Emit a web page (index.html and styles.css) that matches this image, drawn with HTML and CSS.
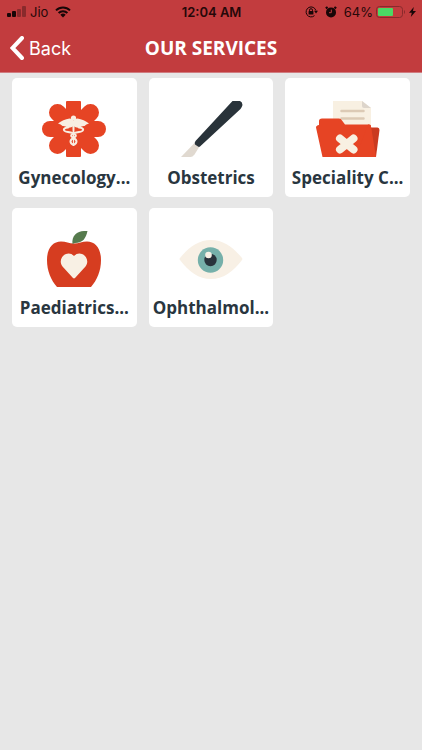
FILE: index.html
```html
<!DOCTYPE html>
<html lang="en">
<head>
<meta charset="utf-8">
<meta name="viewport" content="width=device-width, initial-scale=1">
<title>Our Services</title>
<link rel="stylesheet" href="styles.css">
</head>
<body>
<header class="header">
  <div class="status">
    <div class="status-side">
      <svg class="signal" width="19" height="12" viewBox="0 0 19 12" aria-hidden="true">
        <rect x="0" y="7" width="4" height="4" rx="1"/>
        <rect x="5" y="5" width="4" height="6" rx="1"/>
        <rect class="faint" x="10" y="3" width="4" height="8" rx="1"/>
        <rect class="faint" x="15" y="0" width="4" height="11" rx="1"/>
      </svg>
      <span class="carrier">Jio</span>
      <svg class="wifi" width="16" height="12" viewBox="0 0 16 12" aria-hidden="true">
        <path class="line" d="M1 4.4a10 10 0 0 1 14 0M3.6 7a6.3 6.3 0 0 1 8.8 0"/>
        <path d="M8 11.6 5.3 8.8a4 4 0 0 1 5.4 0z"/>
      </svg>
    </div>
    <span class="time">12:04 AM</span>
    <div class="status-side status-end">
      <svg class="lock" width="13" height="12" viewBox="0 0 13 12" aria-hidden="true">
        <path class="thin" d="M10.900 4.500A5 5 0 1 0 9.500 9.600M4.500 5.500V4.200a1.500 1.500 0 0 1 3 0v1.300"/>
        <rect x="3.600" y="5" width="4.800" height="3.600" rx=".5"/>
        <path d="M9 4.800h4l-2 2.800z"/>
      </svg>
      <svg class="alarm" width="12" height="12" viewBox="0 0 12 12" aria-hidden="true">
        <circle cx="6" cy="6.400" r="5"/>
        <path class="line" d="M.8 2.400 2.600 1M11.200 2.400 9.400 1"/>
        <path class="hands" d="M6.300 3.600v3.100H4"/>
      </svg>
      <span class="percent">64%</span>
      <svg class="battery" width="29" height="14" viewBox="0 0 29 14" aria-hidden="true">
        <rect class="case" x=".5" y="1.500" width="26" height="11" rx="3"/>
        <rect class="charge" x="2" y="3" width="15" height="8" rx="1"/>
        <path class="faint" d="M28 5v4q1-.6 1-2t-1-2z"/>
      </svg>
      <svg class="bolt" width="7" height="10" viewBox="0 0 7 10" aria-hidden="true"><path d="M4.800 0 0 5.800h2.800L1.800 10 7 4H4z"/></svg>
    </div>
  </div>
  <nav class="nav">
    <a class="back" href="#">
      <svg width="14" height="24" viewBox="0 0 14 24" aria-hidden="true"><path d="M12 2 2.500 12 12 22"/></svg>
      <span>Back</span>
    </a>
    <h1 class="title">OUR SERVICES</h1>
  </nav>
</header>
<main class="services">
  <a class="card" href="#">
    <svg class="icon" viewBox="0 0 64 56" aria-hidden="true">
      <path fill="#e64424" d="M24 1q0-1 1-1h13q1 0 1 1v54q0 1-1 1H25q-1 0-1-1z"/>
      <path stroke="#e64424" stroke-width="16" stroke-linecap="round" d="M8 28h48"/>
      <path stroke="#e64424" stroke-width="17" stroke-linecap="round" d="m15.500 11.500 33 33M48.500 11.500l-33 33"/>
      <g fill="#f8eee2">
        <circle cx="31.500" cy="17" r="2.600"/>
        <path d="M16 22.500q5-4 11.500-5 3 0 4 2 1-2 4-2 6.500 1 11.500 5-3 .8-4.500 2.500-3-.2-5 1.500-3 .8-6-1.500-3 2.300-6 1.500-2-1.700-5-1.500-1.500-1.700-4.500-2.500z"/>
        <path d="M30.300 20h2.400l-.7 25h-1z"/>
      </g>
      <path stroke="#f8eee2" stroke-width="2" stroke-linecap="round" d="M26 26.500c-6 .5-5 4 0 4.500 8 1 10 4 5.500 6-4 2-4 5 0 7M37 26.500c6 .5 5 4 0 4.500-8 1-10 4-5.500 6 4 2 4 5 0 7"/>
    </svg>
    <span class="label">Gynecology...</span>
  </a>
  <a class="card" href="#">
    <svg class="icon" viewBox="0 0 64 56" aria-hidden="true">
      <path fill="#e0d9d0" d="M15 42.500 2 56h9.500q2 0 4-2.500l5-8z"/>
      <path fill="#29333a" d="M53.500 0h7.500q2.500 1 2.500 4-.5 2-2 4L21 45.500q-1 .8-2 0l-3-2q-1-1.500.5-3.500z"/>
    </svg>
    <span class="label">Obstetrics</span>
  </a>
  <a class="card" href="#">
    <svg class="icon" viewBox="0 0 64 56" aria-hidden="true">
      <path fill="#f8f0e2" d="M17 0h29l9 7v20H17z"/>
      <path fill="#ddd5cb" d="M46 0l9 7h-7q-2 0-2-2z"/>
      <path stroke="#dccab5" stroke-width="2.500" stroke-linecap="round" d="M25.500 10h22M25.500 17.500h22"/>
      <path fill="#ca3a20" d="M55 26.500h6.500q2 0 2 2.500L60 56h-8z"/>
      <path fill="#e64424" d="M0 26.500q0-2 3-2.500V20q0-2.500 3-2.500h17q2 0 3 2l3 4h24q2 0 2 2L60 56H6.500z"/>
      <path fill="#e64424" d="M52 23.500h1q2 0 2 2l2 30.500H40z"/>
      <path stroke="#f8f0e2" stroke-width="8" stroke-linecap="round" d="m24 37.500 13.500 11M37.500 37.500 24 48.500"/>
    </svg>
    <span class="label">Speciality C...</span>
  </a>
  <a class="card" href="#">
    <svg class="icon" viewBox="0 0 64 56" aria-hidden="true">
      <path fill="#d63d20" d="M15 56C9 49 5 40 5 29c0-12 6-18.500 14-18.500 5 0 8 2 13 2s8-2 13-2C53 10.500 59 17 59 29c0 11-4 20-10 27z"/>
      <path fill="#567b4e" d="M30.500 13C29.500 5 35 0 42 0h3.500C44 7 41 12 33 12z"/>
      <path fill="#f8f0e4" d="M33 47q-1 .8-2 0L20.500 35.500C17 31 19 25 24 23q4.500-1.500 8 2 3.500-3.500 8-2c5 2 7 8 3.500 12.500z"/>
    </svg>
    <span class="label">Paediatrics...</span>
  </a>
  <a class="card" href="#">
    <svg class="icon" viewBox="0 0 64 56" aria-hidden="true">
      <path fill="#f8f0e5" d="M1 29Q0 28 1 27C10 16 20 9 32 9s22 7 31 18q.8 1 0 2C54 41 44 48 32 48S10 41 1 29z"/>
      <circle cx="31.500" cy="29" r="12.700" fill="#76b0aa"/>
      <circle cx="31.500" cy="29" r="6.200" fill="#29333c"/>
      <circle cx="29.500" cy="24" r="3.300" fill="#f8f0e5"/>
    </svg>
    <span class="label">Ophthalmol...</span>
  </a>
</main>
</body>
</html>
```

FILE: styles.css
```css
* {
  box-sizing: border-box;
}

body {
  margin: 0;
  min-height: 100vh;
  background: #e7e7e7;
  color: #29363f;
  font-family: "Open Sans", sans-serif;
}

a {
  color: inherit;
  text-decoration: none;
}

svg {
  display: block;
  flex: none;
}

.header {
  background: #c23c3e;
  border-bottom: 1px solid #d07c80;
}

.status {
  display: grid;
  grid-template-columns: 1fr auto 1fr;
  align-items: center;
  height: 24px;
  padding: 0 6px 0 7px;
  color: #260809;
  fill: #180607;
  font-family: Inter, sans-serif;
  font-size: 13px;
}

.status-side {
  display: flex;
  align-items: center;
}

.status-end {
  justify-content: flex-end;
}

.carrier {
  margin: 0 7px 0 4px;
}

.time {
  font-weight: 600;
}

.alarm {
  margin: 0 7px;
}

.percent {
  margin-right: 3px;
}

.bolt {
  margin-left: 4px;
}

.faint {
  fill: #892a2c;
}

.line {
  fill: none;
  stroke: #180607;
  stroke-width: 2;
}

.thin {
  fill: none;
  stroke: #180607;
}

.hands {
  fill: none;
  stroke: #c23c3e;
}

.case {
  fill: none;
  stroke: #892a2c;
}

.charge {
  fill: #4cd964;
}

.nav {
  display: grid;
  grid-template-columns: 1fr auto 1fr;
  align-items: center;
  height: 48px;
  padding: 0 10px;
  color: #fff;
}

.back {
  display: flex;
  align-items: center;
  gap: 5px;
  font-family: Inter, sans-serif;
  font-size: 18px;
}

.back path {
  fill: none;
  stroke: #fff;
  stroke-width: 4;
  stroke-linecap: round;
}

.title {
  margin: 0;
  font-size: 19px;
  font-weight: 700;
}

.services {
  display: grid;
  grid-template-columns: repeat(3, minmax(0, 1fr));
  gap: 11px 12px;
  padding: 5px 12px;
}

.card {
  display: flex;
  flex-direction: column;
  align-items: center;
  gap: 9px;
  padding: 23px 4px 7px;
  border-radius: 5px;
  background: #fff;
}

.icon {
  width: 64px;
  height: 56px;
  fill: none;
}

.label {
  font-size: 17px;
  font-weight: 700;
  line-height: 24px;
  white-space: nowrap;
}
```
